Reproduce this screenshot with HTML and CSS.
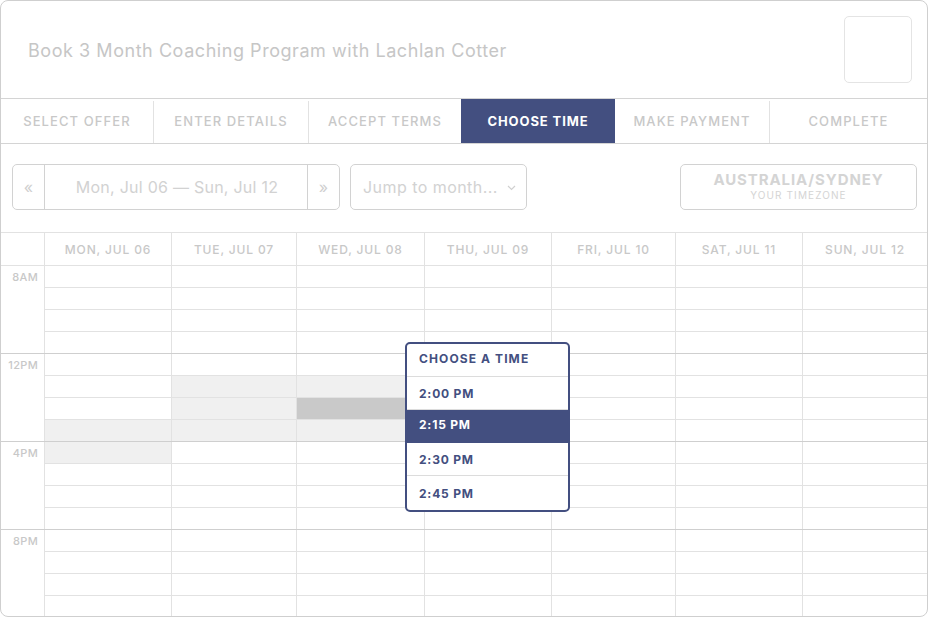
FILE: index.html
```html
<!DOCTYPE html>
<html lang="en">
<head>
<meta charset="utf-8">
<title>Book 3 Month Coaching Program</title>
<link rel="stylesheet" href="styles.css">
</head>
<body>
<div class="card">
  <header class="head">
    <h1 class="title">Book 3 Month Coaching Program with Lachlan Cotter</h1>
    <div class="avatar"></div>
  </header>
  <nav class="tabs">
    <div class="tab">Select Offer</div>
    <div class="tab">Enter Details</div>
    <div class="tab">Accept Terms</div>
    <div class="tab active">Choose Time</div>
    <div class="tab">Make Payment</div>
    <div class="tab">Complete</div>
  </nav>
  <div class="controls">
    <div class="nav">
      <div class="arrow">&laquo;</div>
      <div class="range">Mon, Jul 06 — Sun, Jul 12</div>
      <div class="arrow">&raquo;</div>
    </div>
    <div class="jump">
      <span>Jump to month...</span>
      <svg class="chev" width="9" height="6" viewBox="0 0 9 6"><path d="M1 1l3.5 3.5L8 1" fill="none" stroke="#d0d0d0" stroke-width="1.2"/></svg>
    </div>
    <div class="tz">
      <div class="tz-name">Australia/Sydney</div>
      <div class="tz-sub">Your timezone</div>
    </div>
  </div>
  <div class="days">
    <div class="gut"></div>
    <div class="day">Mon, Jul 06</div>
    <div class="day">Tue, Jul 07</div>
    <div class="day">Wed, Jul 08</div>
    <div class="day">Thu, Jul 09</div>
    <div class="day">Fri, Jul 10</div>
    <div class="day">Sat, Jul 11</div>
    <div class="day">Sun, Jul 12</div>
  </div>
  <div class="block">
    <div class="lbl">8AM</div>
    <div class="c"></div><div class="c"></div><div class="c"></div><div class="c"></div><div class="c"></div><div class="c"></div><div class="c"></div>
    <div class="c"></div><div class="c"></div><div class="c"></div><div class="c"></div><div class="c"></div><div class="c"></div><div class="c"></div>
    <div class="c"></div><div class="c"></div><div class="c"></div><div class="c"></div><div class="c"></div><div class="c"></div><div class="c"></div>
    <div class="c"></div><div class="c"></div><div class="c"></div><div class="c"></div><div class="c"></div><div class="c"></div><div class="c"></div>
  </div>
  <div class="block">
    <div class="lbl">12PM</div>
    <div class="c"></div><div class="c"></div><div class="c"></div><div class="c"></div><div class="c"></div><div class="c"></div><div class="c"></div>
    <div class="c"></div><div class="c busy"></div><div class="c busy"></div><div class="c"></div><div class="c"></div><div class="c"></div><div class="c"></div>
    <div class="c"></div><div class="c busy"></div><div class="c picked"></div><div class="c"></div><div class="c"></div><div class="c"></div><div class="c"></div>
    <div class="c busy"></div><div class="c busy"></div><div class="c busy"></div><div class="c"></div><div class="c"></div><div class="c"></div><div class="c"></div>
  </div>
  <div class="block">
    <div class="lbl">4PM</div>
    <div class="c busy"></div><div class="c"></div><div class="c"></div><div class="c"></div><div class="c"></div><div class="c"></div><div class="c"></div>
    <div class="c"></div><div class="c"></div><div class="c"></div><div class="c"></div><div class="c"></div><div class="c"></div><div class="c"></div>
    <div class="c"></div><div class="c"></div><div class="c"></div><div class="c"></div><div class="c"></div><div class="c"></div><div class="c"></div>
    <div class="c"></div><div class="c"></div><div class="c"></div><div class="c"></div><div class="c"></div><div class="c"></div><div class="c"></div>
  </div>
  <div class="block">
    <div class="lbl">8PM</div>
    <div class="c"></div><div class="c"></div><div class="c"></div><div class="c"></div><div class="c"></div><div class="c"></div><div class="c"></div>
    <div class="c"></div><div class="c"></div><div class="c"></div><div class="c"></div><div class="c"></div><div class="c"></div><div class="c"></div>
    <div class="c"></div><div class="c"></div><div class="c"></div><div class="c"></div><div class="c"></div><div class="c"></div><div class="c"></div>
    <div class="c"></div><div class="c"></div><div class="c"></div><div class="c"></div><div class="c"></div><div class="c"></div><div class="c"></div>
  </div>
  <div class="picker">
    <div class="p-head">Choose a time</div>
    <div class="p-item">2:00 PM</div>
    <div class="p-item sel">2:15 PM</div>
    <div class="p-item">2:30 PM</div>
    <div class="p-item last">2:45 PM</div>
  </div>
</div>
</body>
</html>
```

FILE: styles.css
```css
* { box-sizing: border-box; }
html, body { margin: 0; padding: 0; background: #fff; }
body { font-family: Inter, "Open Sans", sans-serif; }

.card {
  position: relative;
  width: 928px;
  height: 617px;
  border: 1px solid #cfcfcf;
  border-radius: 8px;
  overflow: hidden;
  background: #fff;
}

.head {
  height: 98px;
  border-bottom: 1px solid #d4d4d4;
  display: flex;
  align-items: flex-start;
  justify-content: space-between;
  padding: 15px 15px 0 27px;
}
.title {
  margin: 24px 0 0;
  font-size: 18px;
  font-weight: 400;
  color: #c6c6c6;
  letter-spacing: 0.55px;
}
.avatar {
  width: 68px;
  height: 67px;
  border: 1px solid #e4e4e4;
  border-radius: 5px;
}

.tabs {
  display: grid;
  grid-template-columns: 152px 155px 153px 154px 154px 1fr;
  height: 45px;
  border-bottom: 1px solid #d4d4d4;
}
.tab {
  display: flex;
  align-items: center;
  justify-content: center;
  font-size: 13px;
  font-weight: 500;
  letter-spacing: 1.1px;
  text-transform: uppercase;
  color: #c8c8c8;
  border-left: 1px solid #e2e2e2;
  margin: 2px 0 0;
  padding-bottom: 2px;
}
.tab:first-child { border-left: 0; }
.tab.active {
  background: #434f80;
  color: #fff;
  font-weight: 700;
  letter-spacing: 0.9px;
  border-left: 0;
  margin: 0;
  padding-bottom: 0;
}
.tab.active + .tab { border-left: 0; }

.controls {
  height: 88px;
  display: flex;
  align-items: flex-start;
  padding: 20px 10px 0 11px;
}
.nav {
  display: flex;
  width: 328px;
  height: 46px;
  border: 1px solid #d2d2d2;
  border-radius: 5px;
}
.arrow {
  width: 31px;
  display: flex;
  align-items: center;
  justify-content: center;
  color: #cfcfcf;
  font-size: 16px;
}
.range {
  flex: 1;
  border-left: 1px solid #d2d2d2;
  border-right: 1px solid #d2d2d2;
  display: flex;
  align-items: center;
  justify-content: center;
  color: #d2d2d2;
  font-size: 16px;
  letter-spacing: 0.25px;
  padding-left: 2px;
}
.jump {
  margin-left: 10px;
  width: 177px;
  height: 46px;
  border: 1px solid #d2d2d2;
  border-radius: 5px;
  display: flex;
  align-items: center;
  justify-content: space-between;
  padding: 0 10px 0 12px;
  color: #d2d2d2;
  font-size: 16px;
  letter-spacing: 0.45px;
}
.chev { margin-top: 2px; }
.tz {
  margin-left: auto;
  width: 237px;
  height: 46px;
  border: 1px solid #d2d2d2;
  border-radius: 5px;
  display: flex;
  flex-direction: column;
  align-items: center;
  justify-content: center;
  text-transform: uppercase;
  color: #d4d4d4;
}
.tz-name { font-size: 15px; font-weight: 700; letter-spacing: 0.9px; line-height: 17px; margin-top: -1px; }
.tz-sub { font-size: 10px; letter-spacing: 1.1px; line-height: 13px; margin-top: 1px; }

.days,
.block {
  display: grid;
  grid-template-columns: 44px 127px 125px 128px 127px 124px 127px 1fr;
}
.days {
  height: 34px;
  border-top: 1px solid #e2e2e2;
  border-bottom: 1px solid #e2e2e2;
}
.gut { border-right: 1px solid #e2e2e2; }
.day {
  display: flex;
  align-items: center;
  justify-content: center;
  font-size: 12px;
  font-weight: 500;
  letter-spacing: 0.85px;
  color: #c8c8c8;
  text-transform: uppercase;
  border-right: 1px solid #e2e2e2;
}
.day:last-child { border-right: 0; }

.block {
  grid-template-rows: 22px 22px 22px 21px;
  border-bottom: 1px solid #cfcfcf;
}
.lbl {
  grid-row: 1 / 5;
  border-right: 1px solid #e2e2e2;
  text-align: right;
  padding: 4px 6px 0 0;
  font-size: 11px;
  font-weight: 500;
  letter-spacing: 0.3px;
  color: #c8c8c8;
}
.c {
  border-right: 1px solid #e2e2e2;
  border-bottom: 1px solid #e2e2e2;
}
.c:nth-child(7n+1) { border-right: 0; }
.c:nth-child(n+23) { border-bottom: 0; }
.c.busy { background: #f0f0f0; }
.c.picked { background: #c9c9c9; }

.picker {
  position: absolute;
  left: 404px;
  top: 341px;
  width: 165px;
  border: 2px solid #434f80;
  border-radius: 5px;
  background: #fff;
  overflow: hidden;
}
.p-head, .p-item {
  height: 33px;
  display: flex;
  align-items: center;
  padding-left: 12px;
  font-size: 12px;
  font-weight: 700;
  letter-spacing: 0.8px;
  color: #434f80;
  text-transform: uppercase;
  border-bottom: 1px solid #dcdcdc;
}
.p-head { padding-bottom: 3px; letter-spacing: 1.1px; }
.p-item.sel { background: #434f80; color: #fff; border-bottom-color: #434f80; padding-bottom: 3px; }
.p-item.last { border-bottom: 0; height: 34px; }
```
